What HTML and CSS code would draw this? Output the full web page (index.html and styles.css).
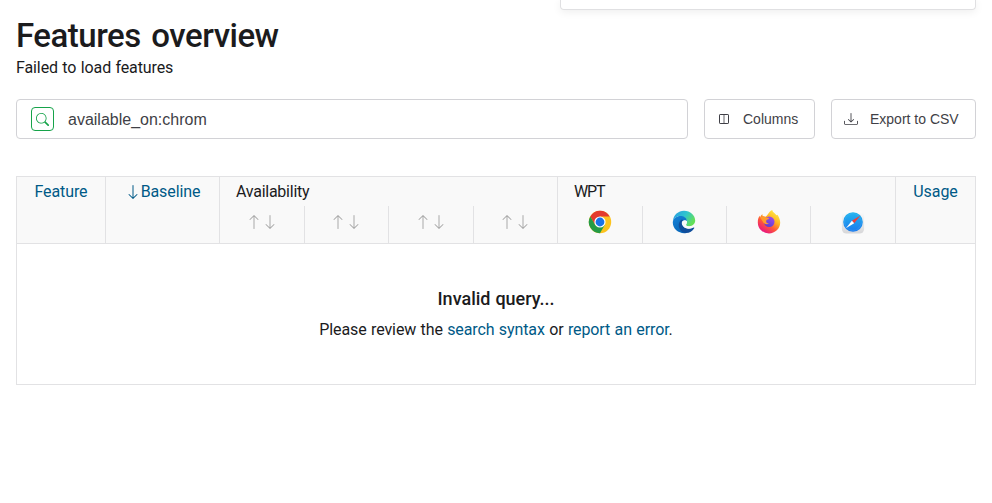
FILE: index.html
```html
<!DOCTYPE html>
<html lang="en">
<head>
<meta charset="utf-8">
<title>Features overview</title>
<link rel="stylesheet" href="styles.css">
</head>
<body>
<svg class="defs" aria-hidden="true">
  <symbol id="down" viewBox="0 0 16 16"><path fill-rule="evenodd" d="M8 1a.5.5 0 0 1 .5.5v11.793l3.146-3.147a.5.5 0 0 1 .708.708l-4 4a.5.5 0 0 1-.708 0l-4-4a.5.5 0 0 1 .708-.708L7.5 13.293V1.5A.5.5 0 0 1 8 1z"/></symbol>
  <symbol id="up" viewBox="0 0 16 16"><path fill-rule="evenodd" d="M8 15a.5.5 0 0 0 .5-.5V2.707l3.146 3.147a.5.5 0 0 0 .708-.708l-4-4a.5.5 0 0 0-.708 0l-4 4a.5.5 0 1 0 .708.708L7.5 2.707V14.5a.5.5 0 0 0 .5.5z"/></symbol>
</svg>
<div class="panel"></div>
<main>
  <h1>Features overview</h1>
  <div class="status">Failed to load features</div>
  <div class="toolbar">
    <div class="search">
      <span class="search-button"><svg width="13" height="13" viewBox="0 0 16 16" fill="currentColor"><path d="M11.742 10.344a6.5 6.5 0 1 0-1.397 1.398h-.001c.03.04.062.078.098.115l3.85 3.85a1 1 0 0 0 1.415-1.414l-3.85-3.85a1.007 1.007 0 0 0-.115-.1zM12 6.5a5.5 5.5 0 1 1-11 0 5.5 5.5 0 0 1 11 0z"/></svg></span>
      <span class="query">available_on:chrom</span>
    </div>
    <button class="button columns"><svg width="10" height="10" viewBox="0 0 10 10" fill="none" stroke="currentColor"><rect x=".5" y=".5" width="9" height="9" rx=".6"/><path d="M5 .5v9" opacity=".8"/></svg><span>Columns</span></button>
    <button class="button export"><svg width="14" height="14" viewBox="0 0 16 16" fill="currentColor"><path d="M.5 9.9a.5.5 0 0 1 .5.5v2.5a1 1 0 0 0 1 1h12a1 1 0 0 0 1-1v-2.5a.5.5 0 0 1 1 0v2.5a2 2 0 0 1-2 2H2a2 2 0 0 1-2-2v-2.5a.5.5 0 0 1 .5-.5z"/><path d="M7.646 11.854a.5.5 0 0 0 .708 0l3-3a.5.5 0 0 0-.708-.708L8.5 10.293V1.5a.5.5 0 0 0-1 0v8.793L5.354 8.146a.5.5 0 1 0-.708.708l3 3z"/></svg><span>Export to CSV</span></button>
  </div>
  <section class="table">
    <div class="head">
      <div class="col single"><a>Feature</a></div>
      <div class="col single"><svg class="arrow"><use href="#down"/></svg><a>Baseline</a></div>
      <div class="col group">
        <div class="label snug">Availability</div>
        <div class="cells avail">
          <div><svg class="arrow"><use href="#up"/></svg><svg class="arrow"><use href="#down"/></svg></div>
          <div><svg class="arrow"><use href="#up"/></svg><svg class="arrow"><use href="#down"/></svg></div>
          <div><svg class="arrow"><use href="#up"/></svg><svg class="arrow"><use href="#down"/></svg></div>
          <div><svg class="arrow"><use href="#up"/></svg><svg class="arrow"><use href="#down"/></svg></div>
        </div>
      </div>
      <div class="col group">
        <div class="label tight">WPT</div>
        <div class="cells wpt">
          <div><svg width="24" height="24" viewBox="0 0 24 24"><circle cx="12" cy="12" r="11.2" fill="#fcc31e"/><path fill="#e33b2e" d="M2.3 6.4A11.2 11.2 0 0 1 21.7 6.4H12L7.1 14.8Z"/><path fill="#259b46" d="M2.3 6.4A11.2 11.2 0 0 0 12 23.2L16.9 14.8H7.1Z"/><circle cx="12" cy="12" r="5.6" fill="#fff"/><circle cx="12" cy="12" r="4.4" fill="#1a73e8"/></svg></div>
          <div><svg width="24" height="24" viewBox="0 0 24 24"><defs><linearGradient id="e1" x1="0" x2="1" y2=".5"><stop offset=".1" stop-color="#299fe0"/><stop offset=".55" stop-color="#2fc5cf"/><stop offset="1" stop-color="#64df58"/></linearGradient><linearGradient id="e2" x2=".5" y2="1"><stop stop-color="#1683d8"/><stop offset="1" stop-color="#0867b9"/></linearGradient></defs><path fill="url(#e1)" d="M.9 11C1.5 5 6.3.8 12 .8c6.3 0 11.2 4.7 11.2 9.8 0 3.5-2.8 5.6-5.7 5.6-2.6 0-4.2-.8-3.4-1.8 1.9-2.4.6-6.1-3.2-7.5C6.6 5.3 2.5 7.2.9 11Z"/><path fill="url(#e2)" d="M.8 12C1.2 8.4 4.7 6 8.4 6c3.6 0 6.3 2 6.6 5-1.6-1.2-4.4-.7-5 1.8L14.3 23C7.6 24.2.4 19.5.8 12Z"/><path fill="#104d9b" d="M8.9 9.9C4 14.6 8 23 14.3 23c3.2 0 6.2-2 7.9-4.8.3-.6-.2-1-.8-.7-5.3 2.8-11.6.3-11.6-4.8 0-1 .5-2 1.3-2.7-.7-.3-1.4-.4-2.2-.1Z"/><path fill="#f9f9f9" d="M14.8 11c-1.8-1.6-4.9-.9-5 2 0 4.2 5.6 7 11.3 4.6l1.5-2.5c-2.5 2-9.5 1.6-8.5-.6.7-1 .9-2.1.7-3.5Z"/></svg></div>
          <div><svg width="24" height="24" viewBox="0 0 24 24"><defs><linearGradient id="f1" x1=".85" y1=".05" x2=".25" y2=".95"><stop stop-color="#fff04a"/><stop offset=".38" stop-color="#ffb421"/><stop offset=".65" stop-color="#ff5938"/><stop offset="1" stop-color="#e81482"/></linearGradient><linearGradient id="f2" x1=".8" x2=".2" y2="1"><stop stop-color="#a34be8"/><stop offset="1" stop-color="#553ed2"/></linearGradient></defs><path fill="url(#f1)" d="M15.2.1c.5 2.6 3 3.3 4.3 5.1l.9-.5c1.6 2.1 2.8 5 2.8 8A11.2 11.2 0 0 1 12 23.5 11.2 11.2 0 0 1 .8 12.4c0-2.8.7-5 2-6.6l.3 1.7c.4-1.4 1.3-2.7 2.4-3.3l.1 2.1c1 0 1.8.2 2.5.5C10.7 6.5 11 2 15.2.1Z"/><circle cx="12.2" cy="11.8" r="5.3" fill="url(#f2)"/><path fill="#ff9b2c" d="M3.1 7.5 5.6 6.3c1.4-.1 2.6.7 3.4 1.2 1.5 0 2.7.2 3.2 1-1.4 1.1-2.4 1-3 2.2-.3 1.8.9 2.7 2.8 2.7-1.5 1.3-3.5.9-5.3-.4Z"/></svg></div>
          <div><svg width="24" height="24" viewBox="0 0 24 24"><defs><linearGradient id="s1" x2="0" y2="1"><stop stop-color="#fcfcfc"/><stop offset="1" stop-color="#d7d7d9"/></linearGradient><linearGradient id="s2" x2="0" y2="1"><stop stop-color="#24b5ee"/><stop offset="1" stop-color="#1979ee"/></linearGradient></defs><rect x=".9" y=".9" width="22.2" height="22.6" rx="4.5" fill="url(#s1)"/><circle cx="12" cy="12" r="9.8" fill="url(#s2)"/><circle cx="12" cy="12" r="8.3" fill="none" stroke="#72c3f8" stroke-width=".6" stroke-dasharray=".4 .8"/><path fill="#f13d38" d="m19.4 5.5-8.5 5.2 2.3 2.5Z"/><path fill="#fff" d="m4.9 18.3 6-7.6 2.3 2.5Z"/></svg></div>
        </div>
      </div>
      <div class="col single"><a>Usage</a></div>
    </div>
    <div class="empty">
      <div class="empty-title">Invalid query...</div>
      <div class="empty-text">Please review the <a>search syntax</a> or <a>report an error</a>.</div>
    </div>
  </section>
</main>
</body>
</html>
```
FILE: styles.css
```css
* { box-sizing: border-box; }
body { margin: 0; height: 503px; overflow: hidden; background: #fff; color: #1b1b1d; font: 16px/24px Roboto, sans-serif; letter-spacing: -.1px; word-spacing: .5px; }
.defs { display: none; }
svg { display: block; flex: none; }
a { color: #005a87; }
.panel { width: 416px; height: 10px; margin-left: 560px; border: 1px solid #e0e0e2; border-top: 0; border-radius: 0 0 4px 4px; box-shadow: 0 2px 8px rgba(0, 0, 0, .07); }
main { padding: 6px 16px 0; }
h1 { margin: 0; height: 40px; font-size: 33px; line-height: 40px; font-weight: 500; letter-spacing: -.5px; word-spacing: 3px; white-space: nowrap; }
.status { height: 24px; }
.toolbar { display: flex; gap: 16px; margin-top: 19px; height: 40px; font-family: "Liberation Sans", sans-serif; letter-spacing: 0; word-spacing: 0; color: #3f3f46; }
.search { flex: 1; display: flex; align-items: center; padding-left: 14px; border: 1px solid #d2d2d6; border-radius: 4px; }
.search-button { display: flex; align-items: center; justify-content: center; width: 23px; height: 24px; border: 1px solid #16a34a; border-radius: 4px; color: #16a34a; }
.query { margin-left: 14px; padding-top: 2px; font-size: 16px; }
.button { display: flex; align-items: center; padding: 0; border: 1px solid #d2d2d6; border-radius: 4px; background: #fff; color: #3f3f46; font: 14px/38px "Liberation Sans", sans-serif; white-space: nowrap; }
.columns { width: 111px; padding-left: 14px; gap: 14px; }
.export { width: 145px; padding-left: 12px; gap: 12px; }
.table { margin-top: 37px; height: 209px; border: 1px solid #e2e2e4; }
.head { display: grid; grid-template-columns: 88px 114px 338px 338px 80px; height: 67px; background: #f9f9f9; border-bottom: 1px solid #e2e2e4; }
.col + .col { border-left: 1px solid #e2e2e4; }
.single { display: flex; justify-content: center; padding-top: 3px; }
.group { display: flex; flex-direction: column; }
.label { height: 29px; padding: 3px 0 0 16px; }
.snug { letter-spacing: -.25px; }
.tight { letter-spacing: -1.2px; }
.cells { display: grid; flex: 1; }
.avail { grid-template-columns: 84px 84px 85px 84px; }
.wpt { grid-template-columns: 84px 84px 84px 85px; }
.cells > div { display: flex; align-items: center; justify-content: center; padding-bottom: 5px; }
.cells > div + div { border-left: 1px solid #e2e2e4; padding-right: 1px; }
.wpt > div:nth-child(3) { padding-right: 0; }
.arrow { width: 16px; height: 16px; fill: #aaa; }
.single .arrow { margin-top: 4px; fill: #005a87; }
.empty { text-align: center; padding-top: 43px; }
.empty-title { font-size: 18px; font-weight: 500; letter-spacing: 0; }
.empty-text { margin-top: 7px; }
```
